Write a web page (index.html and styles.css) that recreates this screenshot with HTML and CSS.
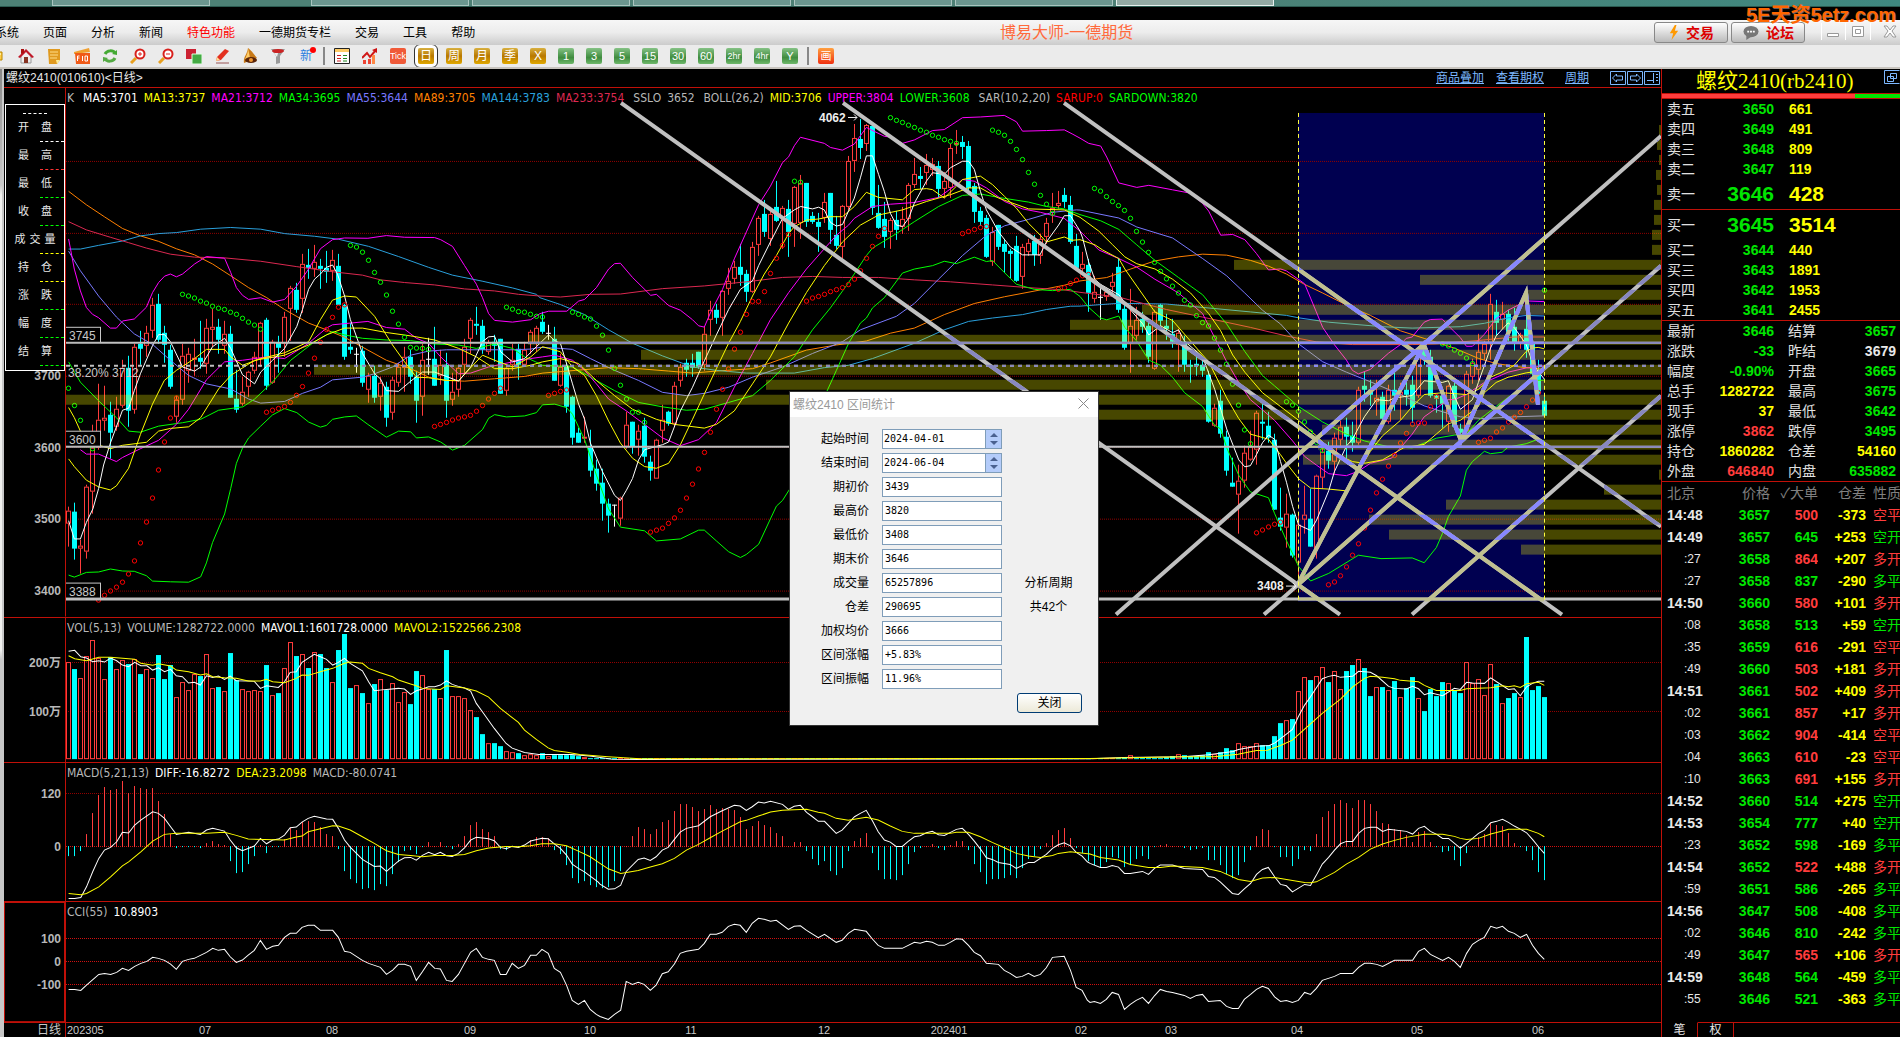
FILE: index.html
```html
<!DOCTYPE html>
<html lang="zh-CN">
<head>
<meta charset="utf-8">
<title>博易大师-一德期货</title>
<link rel="stylesheet" href="styles.css">
</head>
<body>
<div class="taskbar"><i class="task first"></i><i class="task"></i><i class="task"></i><i class="task"></i><i class="task"></i><i class="task"></i><i class="task active"></i></div>
<header class="menubar">
  <nav class="menu">
    <a href="#">系统</a><a href="#">页面</a><a href="#">分析</a><a href="#">新闻</a><a href="#" class="hot">特色功能</a><a href="#">一德期货专栏</a><a href="#">交易</a><a href="#">工具</a><a href="#">帮助</a>
  </nav>
  <h1 class="app-title">博易大师-一德期货</h1>
  <div class="actions">
    <button class="pill"><svg viewBox="0 0 12 18" width="12" height="18"><path d="M7 0 1 10h4L3 18l8-11H7l2-7z" fill="#f90"/></svg>交易</button>
    <button class="pill"><svg viewBox="0 0 18 16" width="18" height="16"><ellipse cx="9" cy="7" rx="8" ry="6" fill="#777"/><path d="M4 11v5l6-4z" fill="#777"/><path d="M5 6h2v2H5zM8 6h2v2H8zM11 6h2v2h-2z" fill="#fff"/></svg>论坛</button>
    <span class="winctl"><svg viewBox="0 0 84 20" width="84" height="20"><g fill="#fff" stroke="#999"><path d="M11.500 10.500h11v3h-11zM36.500 3.500h11v10h-11zM39.500 6.500h5v4h-5z"/><path d="M68 3l3 0 3 4 3-4 3 0-4 5 4 6-3 0-3-4-3 4-3 0 4-6z"/></g><path d="M5.500 0v17M29.500 0v17M54.500 0v17" stroke="#fff"/></svg></span>
  </div>
  <strong class="watermark">5E天资5etz.com</strong>
</header>
<div class="toolbar">
  <button aria-label="打开"><svg viewBox="0 0 16 16"><path d="M0 4h12v8H0z" fill="#fc4" stroke="#b80"/><path d="M1 5h10v2H1z" fill="#fe9"/></svg></button>
  <button aria-label="首页"><svg viewBox="0 0 16 16"><path d="M3 8v7h10V8L8 3z" fill="#eee" stroke="#999"/><path d="M0 9 8 1l8 8-2 1-6-6-6 6z" fill="#c01828"/><path d="M3 1h3v4L3 6z" fill="#a11"/><path d="M6 9h4v6H6z" fill="#832"/></svg></button>
  <button aria-label="公告"><svg viewBox="0 0 16 16"><path d="M2 1h12v11l-3 4H3z" fill="#e09a20"/><path d="M4 4h8M4 7h8M4 10h7" stroke="#fd8"/><path d="m11 16 3-4h-4z" fill="#fe9"/></svg></button>
  <button aria-label="F10"><svg viewBox="0 0 16 16"><path d="m0 4 15-4 1 4-16 2z" fill="#f0a030"/><path d="M1 5h15v11H2z" fill="#f05a18"/><path d="M3.500 13V8h2M3.500 10h2M8.500 13V8M11 8h2.500v5H11z" stroke="#fff" fill="none"/></svg></button>
  <button aria-label="刷新"><svg viewBox="0 0 16 16"><path d="M3 6c2-4 8-4 10-1" stroke="#4a3" stroke-width="3" fill="none"/><path d="m10 6 5 1V2z" fill="#4a3"/><path d="M13 10c-2 4-8 4-10 1" stroke="#5a4" stroke-width="3" fill="none"/><path d="M6 10 1 9v5z" fill="#5a4"/></svg></button>
  <button aria-label="放大"><svg viewBox="0 0 16 16"><path d="m1 15 5-5" stroke="#e8a020" stroke-width="3"/><circle cx="10" cy="6" r="4.500" fill="#fff" stroke="#d8201c" stroke-width="2"/><path d="M8 6h4M10 4v4" stroke="#d22"/></svg></button>
  <button aria-label="缩小"><svg viewBox="0 0 16 16"><path d="m1 15 5-5" stroke="#e8a020" stroke-width="3"/><circle cx="10" cy="6" r="4.500" fill="#fff" stroke="#d8201c" stroke-width="2"/><path d="M8 6h4" stroke="#d22"/></svg></button>
  <button aria-label="叠加"><svg viewBox="0 0 16 16"><path d="M0 1h10v10H0z" fill="#c23"/><path d="M6 6h10v10H6z" fill="#4a4" stroke="#dfd"/></svg></button>
  <button aria-label="画笔"><svg viewBox="0 0 16 16"><path d="m2 13 1-4 8-8 4 2-8 9z" fill="#e33020"/><path d="m2 13 1-4 3 3z" fill="#fd9"/><path d="M2 15h13" stroke="#955"/></svg></button>
  <button aria-label="预警"><svg viewBox="0 0 16 16"><path d="M6 0c4 3 5 5 9 10L2 15C1 9 5 7 6 0z" fill="#c87a18"/><path d="M6 0c0 6-2 8-3 12l5-2z" fill="#fc6"/><ellipse cx="9" cy="12" rx="6" ry="3" fill="#5a2408"/><circle cx="9" cy="12" r="2" fill="#e93"/></svg></button>
  <button aria-label="筛选"><svg viewBox="0 0 16 16"><path d="M1 1h14l-5 7v7l-4 1V8z" fill="#999"/><ellipse cx="8" cy="3" rx="6" ry="2" fill="#c22"/><path d="m4 5 3 4 1-4z" fill="#eee"/></svg></button>
  <button class="new" aria-label="新">新<i></i></button>
  <span class="sep"></span>
  <button aria-label="报价表"><svg viewBox="0 0 16 16"><path d="M.5.5h15v15H.5z" fill="#fff" stroke="#222"/><path d="M1 1h14v3H1z" fill="#fc6"/><path d="M3 7.500h4M3 10.500h4M3 13h4" stroke="#c22"/><path d="M9 7.500h4M9 10.500h4M9 13h4" stroke="#282"/></svg></button>
  <button aria-label="走势"><svg viewBox="0 0 16 16"><path d="M0 10 5 5l3 4 6-7" stroke="#d01818" stroke-width="2" fill="none"/><path d="M1 12h3v4H1zM6 11h3v5H6z" fill="#e43"/><path d="M10 7h3v9h-3z" fill="#f84"/><path d="m10 2 5-2v5z" fill="#c11"/></svg></button>
  <button class="key tick">Tick</button>
  <button class="key gold on">日</button><button class="key gold">周</button><button class="key gold">月</button><button class="key gold">季</button><button class="key gold">X</button>
  <button class="key green">1</button><button class="key green">3</button><button class="key green">5</button><button class="key green">15</button><button class="key green">30</button><button class="key green">60</button><button class="key green small">2hr</button><button class="key green small">4hr</button><button class="key green">Y</button>
  <span class="sep"></span>
  <button class="key draw">画</button>
</div>
<main class="workspace">
  <div class="edge"></div>
  <section class="charts">
    <div class="chart-head"><span>螺纹2410(010610)&lt;日线&gt;</span>
      <nav><a href="#">商品叠加</a><a href="#">查看期权</a><a href="#" class="gap">周期</a>
      <svg viewBox="0 0 51 14" width="51" height="14" fill="none" stroke="#7db8ff"><path d="M.5.5h15v13H.5zM17.500.5h15v13h-15zM34.500.5h15v13h-15z"/><path d="M2.500 7l4-4v2h6v4h-6v2zM30.500 7l-4-4v2h-6v4h6v2zM37 9.500h6M43.500 2v10M46 3.500h2M46 6.500h2M46 9.500h2"/></svg></nav>
    </div>
    <div class="panel price">
      <svg class="plot" id="price" viewBox="4 88 1657 529" preserveAspectRatio="none"></svg>
      <p class="readout"><span class="grey k">K</span><span class="white">MA5:3701</span><span class="yellow">MA13:3737</span><span class="magenta">MA21:3712</span><span class="lime">MA34:3695</span><span class="violet">MA55:3644</span><span class="orange">MA89:3705</span><span class="blue">MA144:3783</span><span class="crimson">MA233:3754</span><span class="grey pre">SSLO</span><span class="grey">3652</span><span class="grey pre">BOLL(26,2)</span><span class="yellow">MID:3706</span><span class="magenta">UPPER:3804</span><span class="lime">LOWER:3608</span><span class="grey pre">SAR(10,2,20)</span><span class="red">SARUP:0</span><span class="lime">SARDOWN:3820</span></p>
      <ul class="infobox">
        <li class="top"></li>
        <li><b>开</b><b>盘</b></li><li class="up"><b>最</b><b>高</b></li><li class="down"><b>最</b><b>低</b></li><li class="down"><b>收</b><b>盘</b></li><li class="qty"><b>成</b><b>交</b><b>量</b></li><li class="qty"><b>持</b><b>仓</b></li><li class="down"><b>涨</b><b>跌</b></li><li class="down"><b>幅</b><b>度</b></li><li class="down"><b>结</b><b>算</b></li>
      </ul>
    </div>
    <div class="panel vol">
      <svg class="plot" id="vol" viewBox="4 618 1657 144" preserveAspectRatio="none"></svg>
      <p class="readout"><span class="grey">VOL(5,13)</span><span class="grey">VOLUME:1282722.0000</span><span class="white">MAVOL1:1601728.0000</span><span class="yellow">MAVOL2:1522566.2308</span></p>
    </div>
    <div class="panel macd">
      <svg class="plot" id="macd" viewBox="4 763 1657 138" preserveAspectRatio="none"></svg>
      <p class="readout"><span class="grey">MACD(5,21,13)</span><span class="white">DIFF:-16.8272</span><span class="yellow">DEA:23.2098</span><span class="grey">MACD:-80.0741</span></p>
    </div>
    <div class="panel cci">
      <svg class="plot" id="cci" viewBox="4 902 1657 120" preserveAspectRatio="none"></svg>
      <p class="readout"><span class="grey">CCI(55)</span><span class="white">10.8903</span></p>
    </div>
    <svg class="plot months" id="months" viewBox="4 1023 1657 14" preserveAspectRatio="none"></svg>
  </section>
  <aside class="quote">
    <h2>螺纹2410(rb2410)<svg viewBox="0 0 16 14" width="16" height="14" fill="none" stroke="#7db8ff"><path d="M15.500.5H.5v13h15M6.500 3.500h6v5h-6zM3.500 6.500h6v5h-6z"/></svg></h2>
    <div class="ratio"><i></i></div>
    <table class="book"><tbody id="asks"></tbody></table>
    <table class="book"><tbody id="bids"></tbody></table>
    <table class="facts"><tbody id="facts"></tbody></table>
    <table class="ticks"><thead><tr><th>北京</th><th>价格</th><th>✓大单</th><th>仓差</th><th>性质</th></tr></thead><tbody id="ticks"></tbody></table>
    <div class="tabs"><button class="on">笔</button><button>权</button></div>
  </aside>
</main>
<section class="dialog" role="dialog" aria-labelledby="dlg">
  <header><h2 id="dlg">螺纹2410 区间统计</h2><button aria-label="关闭窗口"><svg viewBox="0 0 11 11" width="11" height="11"><path d="m.5.5 10 10m0-10-10 10" stroke="#888"/></svg></button></header>
  <form>
    <label for="f1">起始时间</label><span class="spin"><input id="f1" value="2024-04-01"><i></i></span>
    <label for="f2">结束时间</label><span class="spin"><input id="f2" value="2024-06-04"><i></i></span>
    <label for="f3">期初价</label><input id="f3" value="3439">
    <label for="f4">最高价</label><input id="f4" value="3820">
    <label for="f5">最低价</label><input id="f5" value="3408">
    <label for="f6">期末价</label><input id="f6" value="3646">
    <label for="f7">成交量</label><input id="f7" value="65257896"><span class="side">分析周期</span>
    <label for="f8">仓差</label><input id="f8" value="290695"><span class="side">共42个</span>
    <label for="f9">加权均价</label><input id="f9" value="3666">
    <label for="f10">区间涨幅</label><input id="f10" value="+5.83%">
    <label for="f11">区间振幅</label><input id="f11" value="11.96%">
  </form>
  <button class="close">关闭</button>
</section>
<script src="script.js"></script>
</body>
</html>
```
FILE: styles.css
```css
* { box-sizing: border-box; }
html, body { height: 100%; }
body { margin: 0; min-width: 1200px; min-height: 100vh; display: flex; flex-direction: column; overflow: hidden; position: relative; background: #000; color: #e8e8e8; font: 12px/16px "Liberation Sans", "Noto Sans CJK SC", sans-serif; }
button { font: inherit; padding: 0; margin: 0; border: 0; background: none; }
h1, h2, p, ul { margin: 0; padding: 0; font-weight: normal; }
a { color: inherit; text-decoration: none; }

.taskbar { flex: none; height: 7px; display: flex; gap: 3px; padding-left: 52px; background: linear-gradient(90deg, #4d8075 60%, #3f8880); border-bottom: 1px solid #2b5a50; }
.task { width: 158px; background: #6b968f; border: 1px solid #a9c4bf; border-top: 0; }
.task.first { margin-right: 98px; }
.task.active { background: #93aaa4; border-color: #e6efed; }

.menubar { flex: none; position: relative; margin-top: 13px; height: 25px; display: flex; align-items: center; justify-content: space-between; background: linear-gradient(#f6f6f6, #ececec 50%, #cbcbcb); color: #000; }
.menu { display: flex; gap: 24px; margin-left: -5px; white-space: nowrap; flex: 0 0 871px; }
.menu .hot { color: #f00; }
.app-title { font-size: 16px; color: #ff6a3c; flex: 1; text-align: left; padding-left: 134px; white-space: nowrap; }
.actions { display: flex; gap: 3px; align-items: center; }
.pill { width: 74px; height: 21px; display: flex; align-items: center; justify-content: center; gap: 6px; border: 1px solid #888; border-radius: 3px; background: linear-gradient(#fff, #bbb); color: #d00; font-weight: bold; font-size: 14px; }
.pill svg { height: 15px; }
.winctl { width: 92px; padding-left: 8px; height: 20px; }
.watermark { position: absolute; right: 4px; top: -17px; font: bold 20px/24px "Liberation Sans", "Noto Sans CJK SC", sans-serif; color: #ff6600; text-shadow: 1px 1px #fff6; }

.toolbar { flex: none; height: 24px; display: flex; align-items: center; background: #ebebeb; border-bottom: 2px solid #c8c4be; overflow: hidden; }
.toolbar button { width: 28px; flex: none; height: 22px; display: flex; align-items: center; justify-content: center; }
.toolbar button:first-child { margin-left: -16px; }
.toolbar svg { width: 16px; height: 16px; }
.toolbar .sep { width: 2px; height: 18px; margin: 0 3px; flex: none; background: #888; }
.toolbar .new { position: relative; color: #2a7fe0; font-size: 12px; }
.new i { position: absolute; right: 4px; top: 2px; width: 6px; height: 6px; border-radius: 50%; background: #f00; }
.toolbar .key { width: 16px; height: 16px; margin: 0 6px; border-radius: 2px; color: #fff; font-size: 11px; line-height: 16px; }
.key.gold { background: linear-gradient(#d8b040, #b87800 50%, #e0a800); }
.toolbar .key.gold { font-size: 12px; }
.key.gold.on { outline: 1px solid #333; box-shadow: 0 0 0 3px #fff; outline-offset: 3px; }
.key.green { background: linear-gradient(#85c285, #3f8c3f 60%, #6fb86a); }
.toolbar .key.small { font-size: 9px; }
.toolbar .key.tick { background: #f05a38; font-size: 9px; }
.key.draw { background: linear-gradient(#ffa040, #f03010); }

.workspace { flex: 1; min-height: 0; display: flex; }
.edge { width: 4px; background: linear-gradient(#888, #c8c8c8 12%, #f0f0ee 13%, #f0f0ee 60%, #c8c8c8 61%); border-right: 2px solid #c8c8c8; }
.charts { flex: 1; min-width: 0; display: grid; grid-template-rows: 18px 530fr 145fr 139fr 121fr 14px; border-right: 1px solid #c01008; }
.chart-head { display: flex; justify-content: space-between; align-items: center; padding-left: 2px; }
.chart-head nav { display: flex; gap: 12px; color: #7db8ff; align-items: center; }
.chart-head a { text-decoration: underline; }
.chart-head a.gap { margin: 0 9px; }
.panel { position: relative; min-height: 0; border-bottom: 1px solid #c01008; }
.panel.price { border-top: 1px solid #c01008; }
.plot { display: block; width: 100%; height: 100%; overflow: hidden; }
.panel .plot { position: absolute; inset: 0; }
.plot text { font: 12px "Liberation Sans", "Noto Sans CJK SC", sans-serif; fill: #c8c8c8; }
.plot .axis { text-anchor: end; font-size: 12px; font-weight: bold; fill: #b8b8b8; }
.plot .mid { text-anchor: middle; font-size: 11px; }
.plot .start { font-size: 11px; }
.plot .bold { font-weight: bold; fill: #eee; }
.readout { position: absolute; left: 63px; top: 2px; display: flex; gap: 6px; white-space: nowrap; font: 12px/16px "DejaVu Sans Condensed", "Noto Sans", sans-serif; }
.readout .k { margin-right: 3px; }
.readout .pre { margin-left: 3px; }
.grey { color: #b8b8b8; } .white { color: #fff; } .yellow { color: #ff0; } .magenta { color: #f0f; } .lime { color: #0f0; } .violet { color: #7878ff; } .orange { color: #ff8000; } .blue { color: #2aa0dc; } .crimson { color: #dc2850; } .red { color: #f00; }

.infobox { position: absolute; left: 1px; top: 16px; width: 60px; height: 267px; list-style: none; border: 1px solid #fff; background: #000; }
.infobox li { height: 28px; display: flex; justify-content: center; gap: 12px; padding: 5px 0 0; position: relative; line-height: 17px; font-size: 11px; }
.infobox li:nth-child(6) { gap: 4px; }
.infobox b { font-weight: normal; }
.infobox li.top { height: 9px; }
.infobox li::after { content: ""; position: absolute; right: 0; bottom: 0; width: 24px; border-bottom: 1px dashed #fff; }
.infobox li.top::after { right: 17px; }
.infobox .up::after { border-color: #f33; } .infobox .down::after { border-color: #0f0; } .infobox .qty::after { border-color: #ff0; }

.quote { flex: 0 0 238px; overflow: hidden; display: flex; flex-direction: column; }
.quote h2 { height: 24px; flex: none; display: flex; justify-content: space-between; padding-left: 34px; color: #ff0; font: 21px/24px "Liberation Serif", "Noto Sans CJK SC", serif; white-space: nowrap; }
.quote h2 svg { margin-top: 1px; }
.ratio { height: 6px; flex: none; border: solid #c01008; border-width: 1px 0; background: #00e600; }
.ratio i { display: block; height: 4px; width: 81%; background: #ff3c3c; }
.quote table { width: 238px; border-collapse: collapse; table-layout: fixed; border-bottom: 1px solid #c01008; flex: none; }
.quote td, .quote th { padding: 0; height: 20px; font: bold 14px/20px "Liberation Sans", "Noto Sans CJK SC", sans-serif; text-align: right; white-space: nowrap; overflow: hidden; }
.quote .lab { text-align: left; font-weight: normal; padding-left: 5px; color: #e0e0e0; }
.book .lab { width: 40px; } .book .p { width: 72px; }
.book .v { text-align: left; padding-left: 15px; }
.book .big td { height: 30px; line-height: 30px; }
.book .big .p, .book .big .v { font-size: 21px; }
.facts .lab { width: 40px; } .facts .p { width: 72px; }
.facts .lab2 { width: 54px; padding-left: 14px; }
.facts td:last-child { padding-right: 4px; }
.quote .ticks { border-bottom: 0; }
.ticks th, .ticks td { height: 22px; line-height: 22px; }
.ticks th { width: 48px; font-weight: normal; color: #808080; }
.ticks th:first-child { width: 60px; text-align: left; padding-left: 5px; }
.ticks th:last-child { width: auto; text-align: left; padding-left: 7px; text-overflow: clip; }
.ticks td:first-child { text-align: left; padding-left: 5px; }
.ticks td.sec { font-weight: normal; font-size: 12px; padding-left: 22px; }
.ticks td:last-child { text-align: left; padding-left: 7px; font-weight: normal; text-overflow: clip; }
.g { color: #00e600; } .y { color: #ff0; } .r { color: #ff3c3c; } .w { color: #e8e8e8; }
.tabs { margin-top: auto; flex: none; height: 15px; display: flex; overflow: hidden; }
.tabs::after { content: ""; flex: 1; border-top: 1px solid #c01008; }
.tabs button { width: 36px; height: 15px; line-height: 15px; color: #e8e8e8; border-top: 1px solid #c01008; border-right: 1px solid #c01008; }
.tabs .on { border-top-color: #000; }

.dialog { position: absolute; left: 790px; top: 392px; width: 308px; height: 333px; background: #f0f0f0; color: #000; outline: 1px solid #333; }
.dialog header { height: 25px; background: #fff; display: flex; align-items: center; justify-content: space-between; padding: 0 9px 0 3px; }
.dialog h2 { font-size: 12px; color: #999; }
.dialog form { display: grid; grid-template-columns: 79px 120px 80px; grid-auto-rows: 20px; row-gap: 4px; column-gap: 13px; padding-top: 12px; align-items: center; }
.dialog label { text-align: right; grid-column: 1; }
.dialog .side { grid-column: 3; text-align: center; margin-right: 13px; }
.dialog input { width: 100%; min-width: 0; height: 20px; border: 1px solid #7f9db9; background: #fff; padding: 0 2px 1px; font: 10px "DejaVu Sans Mono", monospace; color: #000; }
.spin { display: flex; border: 1px solid #7f9db9; height: 20px; }
.spin input { border: 0; height: 18px; padding: 0 1px 1px; }
.spin i { flex: 0 0 16px; background: #b4ccfa; border-left: 1px solid #7f9db9; display: flex; flex-direction: column; align-items: center; justify-content: center; gap: 4px; }
.spin i::before, .spin i::after { content: ""; border: 4px solid transparent; border-top: 0; border-bottom: 4px solid #4a6190; }
.spin i::after { border-bottom: 0; border-top: 4px solid #4a6190; }
.dialog .close { position: absolute; right: 16px; bottom: 12px; width: 65px; height: 20px; border: 1px solid #003c74; border-radius: 3px; background: linear-gradient(#fff, #ece9d8); }
```
FILE: script.js
```js
// Digitised series are stored per sheet: origin x, origin y, units per pixel x, units per pixel y.
const S = {
  a: [0, 90, 2.8, 2.958], b: [540, 90, 2.8, 2.958], c: [1080, 90, 2.658, 2.904],
  d: [0, 600, 2.45, 3], e: [600, 610, 2.904, 3], f: [1090, 610, 2.703, 3]
};
const X = i => 68 + 6 * i;
const Y = (s, v) => S[s][1] + v / S[s][3];
const RED = '#ff3c3c', CYAN = '#00ffff';
const out = { price: [], vol: [], macd: [], cci: [], months: [] };
const line = (p, x1, y1, x2, y2, c, extra = '') => out[p].push(`<line x1="${x1}" y1="${y1}" x2="${x2}" y2="${y2}" stroke="${c}" ${extra}/>`);
const rect = (p, x, y, w, h, f, extra = '') => out[p].push(`<rect x="${x}" y="${y}" width="${w}" height="${h}" fill="${f}" ${extra}/>`);
const text = (p, x, y, t, cls) => out[p].push(`<text x="${x}" y="${y}" class="${cls || ''}">${t}</text>`);
function curve(p, color, parts) {
  const pts = []; let last = -1;
  for (const [s, str] of parts) for (const q of str.trim().split(/\s+/)) {
    const [a, b] = q.split(',').map(Number), x = S[s][0] + a / S[s][2];
    if (x > last + 1) { pts.push(x.toFixed(1) + ',' + Y(s, b).toFixed(1)); last = x; }
  }
  out[p].push(`<polyline points="${pts.join(' ')}" fill="none" stroke="${color}" stroke-width="1"/>`);
}
const grid = (p, ys, c) => ys.forEach(y => line(p, 66, y + .5, 1661, y + .5, c, 'stroke-dasharray="1 1"'));

// selected range
rect('price', 1298, 113, 246, 489, '#000050');
grid('price', [161, 233, 304, 376, 447, 519, 591], '#900000');

// candles: kind, high, body top, body bottom, low
const candles = [
['a', 0, `r1234,1246,1283,1352 c1222,1248,1357,1390 r1330,1350,1357,1432 r1168,1173,1366,1388 r990,1058,1188,1253 r870,977,1058,1065 r877,970,978,1010 c924,962,1015,1092 r907,945,997,1008 r800,823,934,940 c788,821,950,997 r752,761,948,958 c714,751,766,812 r698,720,757,790 r616,637,712,735 c604,633,740,750 c698,719,755,808 c755,769,879,885 r906,918,968,985 r750,788,918,932 r762,782,830,866 r737,792,800,845 c683,792,805,825 r678,705,810,840 r648,702,709,760 c678,702,740,780 r683,723,758,780 c698,721,910,912 c828,913,948,955 r850,892,930,935 r830,835,880,907 r775,790,830,840 r685,690,795,820 c673,681,876,888 r740,745,867,870 c728,749,762,838 r657,671,750,790 r580,587,649,742 c571,592,651,660 r485,515,619,660 c470,518,526,560 r459,508,530,552 c500,521,530,588 c476,527,537,572 r473,504,535,565 c485,521,635,635 c632,637,790,798 c689,760,770,780 w764,780,780,836 c758,771,866,878 r837,847,886,925 c817,847,910,925 r850,866,908,950 c865,879,971,997 r850,858,955,975 r808,820,866,880 r760,790,822,892 c770,790,848,870 c830,848,919,984 r752,798,909,964 w735,797,797,842 c701,796,876,876 r770,812,847,872 c778,812,920,970 r838,894,918,934 r812,822,887,908 r738,761,814,840 r675,681,737,780 c642,692,699,724 c681,697,768,780 r740,747,774,784 c724,745,758,806 c738,738,898,900 r815,821,890,905 r750,800,812,830 c750,767,812,858 r745,768,812,814 r710,717,748,780 r697,705,748,776 c657,685,716,722 w695,719,719,740 c701,738,861,861`],
['b', 82, `r780,820,875,880 c808,817,937,956 c904,908,1029,1049 c1000,1015,1043,1043 r968,1025,1031,1045 c1005,1058,1126,1145 c1095,1121,1165,1185 c1120,1163,1225,1275 c1210,1225,1259,1310 w1229,1229,1229,1292 r1205,1208,1270,1290 r953,992,1055,1062 c982,982,1055,1076 r990,1010,1035,1083 c970,994,1086,1104 c1082,1101,1126,1156 r1033,1036,1152,1152 r933,975,1008,1045 c950,953,987,995 r865,875,988,998 r810,820,860,880 c797,808,828,850 c782,808,822,848 c775,775,820,826 r700,723,812,830 r625,652,680,728 c632,652,675,692 r592,596,674,728 r527,566,590,605 r506,525,560,575 c457,525,546,580 c533,544,598,626 r450,463,597,600 r374,380,458,490 c326,367,420,434 r345,368,442,460 c270,346,387,390 r344,350,378,470 c325,351,420,493 r284,288,396,465 r252,276,392,440 c275,275,390,404 c360,374,390,396 c365,391,404,480 r306,330,378,392 c306,306,415,457 c372,430,461,470 r340,344,465,500 r196,210,345,355 r102,143,211,243 c85,145,171,205 r100,105,160,180 c100,107,348,370 c282,365,407,412 c330,382,434,466 r378,385,421,471 c358,385,413,445 r345,382,404,425 r276,282,382,418 r200,247,282,290 c228,253,262,293 r188,222,245,280 r200,220,237,255 c210,225,294,320 r243,270,294,318 r160,173,290,318 r118,158,163,188 c137,154,168,203 c150,165,290,310 c275,284,360,392 c345,358,390,402 c370,378,493,497 r405,419,510,520 c400,400,463,473 c440,457,478,540 c470,475,485,558 c432,460,564,568 r457,463,554,590 r440,454,478,490 c428,447,488,520 r425,440,492,515 r380,394,436,455 r305,348,365,392 r298,335,342,352 c290,311,330,350 c314,340,449,455 c425,462,526,530 r478,515,530,540`],
['c', 170, `c490,508,590,645 r540,587,608,618 w568,600,600,668 r585,588,600,612 r530,558,571,590 c488,514,638,648 c625,636,748,754 r578,686,738,822 r630,667,715,725 c645,665,687,705 c675,686,774,792 r640,644,811,812 c622,625,670,684 c650,686,695,725 c665,709,733,748 r695,705,740,818 c715,733,800,818 c785,800,805,851 c765,795,802,830 c775,798,815,832 c815,827,963,967 r912,924,977,980 c870,903,998,1010 c990,1007,1105,1120 c1068,1141,1152,1153 r1090,1136,1175,1288 r1035,1055,1136,1155 r990,1038,1075,1076 r933,937,1046,1090 c912,964,970,1015 c935,976,1012,1025 c1000,1017,1219,1219 c1155,1244,1268,1282 r1172,1230,1273,1330 c1232,1234,1352,1358 r1230,1264,1374,1430 r1150,1235,1250,1288 c1160,1247,1326,1328 r1118,1122,1332,1362 r1040,1050,1128,1160 c1022,1048,1076,1102 r995,1012,1080,1115 r962,980,1016,1040 c952,978,1007,1072 c965,1005,1024,1052 r862,870,1026,1030 c818,860,870,905 c842,870,886,918 r842,893,906,948 c877,892,955,955 r858,872,965,970 c818,872,888,933 r852,878,886,958 c848,871,885,918 c830,857,923,968 r745,760,890,895 c740,752,776,800 c755,775,888,893 c885,890,896,937 c878,890,912,982 r858,860,965,992 c850,860,978,985 c970,984,996,1022 r815,825,990,1000 r780,793,832,853 r710,760,812,844 r728,737,768,785 r592,622,738,785 c610,645,676,715 r615,650,668,695 c640,650,703,730 c632,689,738,757 r705,712,738,752 c578,694,755,778 c725,738,825,830 c785,815,882,915 c883,903,946,950`]];
const kinds = [];
for (const [s, start, str] of candles) str.split(' ').forEach((q, n) => {
  const i = start + n, k = q[0], [h, t, b, l] = q.slice(1).split(',').map(v => Math.round(Y(s, +v))), x = X(i);
  kinds[i] = k;
  if (k === 'c') { rect('price', x, h, 1, Math.max(1, l - h), CYAN); rect('price', x - 2, t, 5, Math.max(1, b - t), CYAN); }
  else if (k === 'w') { rect('price', x, h, 1, l - h, '#fff'); rect('price', x - 2, t, 5, 1, '#fff'); }
  else {
    rect('price', x, h, 1, Math.max(0, t - h), RED); rect('price', x, b, 1, Math.max(0, l - b), RED);
    rect('price', x - 1.5, t + .5, 4, Math.max(1, b - t - 1), 'none', `stroke="${RED}"`);
  }
});

// moving averages and Bollinger bands
curve('price', '#ff8000', [['a', '192,300 242,340 292,375 343,410 393,432 444,448 494,470 545,488 595,515 646,550 696,585 747,615 797,650 864,690 914,710 965,732 1030,770 1082,800 1150,825 1200,850 1250,860 1301,862 1385,855 1468,848 1520,838'], ['b', '0,838 100,830 192,822 276,825 360,832 427,838 494,832 595,825 645,808 746,770 830,755 914,743 981,720 1048,705 1132,665 1216,632 1301,612 1401,592 1468,578'], ['c', '0,555 71,545 135,520 199,497 262,485 326,477 390,480 453,495 501,512 549,535 597,565 645,590 708,625 772,655 852,700 915,722 995,750 1059,780 1106,795 1170,805 1234,812']]);
curve('price', '#2aa0dc', [['a', '192,471 225,471 276,460 343,447 393,432 444,425 494,422 562,412 646,407 730,412 797,425 881,433 948,442 1032,463 1116,493 1200,525 1267,548 1350,566 1435,586 1502,605'], ['b', '0,615 57,635 125,665 192,710 259,750 343,787 427,820 494,830 578,838 712,838 796,822 864,815 931,795 1048,750 1132,710 1200,685 1267,675 1351,665 1418,650 1485,640'], ['c', '0,628 103,620 230,622 326,632 453,645 549,655 581,662 661,675 804,688 883,692 1011,688 1075,678 1138,662 1186,655 1234,657']]);
curve('price', '#dc2850', [['a', '192,390 242,414 309,436 360,452 410,468 477,486 545,495 629,497 730,507 831,523 931,538 1015,548 1065,562 1133,570 1217,577 1301,589 1385,595 1452,605'], ['b', '0,610 57,613 141,605 225,604 343,588 460,580 578,568 679,555 763,552 847,555 948,555 1048,562 1149,568 1267,577 1368,585 1468,592'], ['c', '0,588 103,602 230,638 326,660 453,690 549,715 628,732 724,740 883,740 947,738 1059,728 1154,718 1234,718']]);
curve('price', '#7878ff', [['a', '192,477 225,535 276,610 326,672 376,722 427,753 477,800 528,845 578,870 646,885 696,915 730,927 797,922 847,898 897,880 931,858 1015,850 1049,840 1099,820 1150,785 1200,773 1250,769 1435,769 1486,767'], ['b', '0,762 57,765 91,768 141,795 209,830 276,860 343,895 410,905 460,898 528,880 595,850 679,820 763,780 847,745 897,710 998,670 1048,632 1116,560 1183,490 1250,430 1301,402 1368,383 1435,362 1502,355'], ['c', '0,349 103,372 151,398 246,430 326,490 390,540 438,590 485,640 533,680 581,738 645,790 708,820 772,848 852,885 915,918 963,935 1011,950 1075,955 1154,950 1234,947']]);
curve('price', '#00ff00', [['a', '192,805 225,865 276,920 326,970 360,1010 393,1013 444,995 511,985 562,975 612,948 680,938 713,915 763,865 814,800 881,745 931,715 965,725 1015,735 1082,740 1150,742 1217,752 1284,755 1334,765 1385,752 1435,765 1469,790 1500,805'], ['b', '7,815 91,820 141,850 209,890 276,925 343,938 410,948 460,945 528,925 595,905 645,860 712,790 763,710 813,645 864,570 914,490 931,468 998,425 1048,390 1116,345 1183,312 1233,308 1284,318 1368,332 1418,345 1468,352'], ['c', '0,362 55,380 103,405 151,450 199,495 262,545 326,595 390,680 438,760 485,830 517,860 581,920 645,965 708,1000 756,1020 820,1037 883,1040 947,1012 995,1003 1027,1000 1059,960 1106,920 1154,880 1202,845 1234,843']]);
curve('price', '#ff00ff', [['a', '225,1065 242,1078 276,1078 326,1100 343,1088 393,1062 444,1037 494,990 528,945 578,858 629,805 679,800 747,790 797,795 864,750 914,705 931,695 1030,685 1082,703 1133,708 1166,735 1200,750 1234,790 1284,840 1318,838 1368,820 1435,805 1486,795'], ['b', '7,790 41,785 91,800 125,830 158,870 192,915 242,950 293,990 343,1030 393,1053 444,1035 494,985 544,880 595,780 645,680 696,600 746,530 796,470 830,430 864,400 880,380 931,345 981,338 1048,333 1116,318 1166,280 1183,265 1216,270 1250,290 1301,330 1351,352 1401,362 1468,380'], ['c', '0,410 50,465 103,490 151,515 199,550 262,590 326,650 358,720 390,790 422,850 453,900 485,930 517,960 565,1020 597,1065 628,1090 661,1115 708,1121 740,1108 772,1085 828,1070 852,1040 883,1000 915,950 947,925 979,900 995,900 1027,885 1075,850 1138,820 1186,808 1234,802']]);
curve('price', '#ffff00', [['a', '192,940 208,970 225,1010 242,1040 309,1062 343,1052 410,1043 444,1010 477,1002 528,997 562,970 612,885 646,845 713,800 797,785 864,755 914,725 965,705 1015,705 1082,718 1150,728 1217,740 1284,765 1334,790 1385,825 1435,825 1486,815'], ['b', '7,805 57,795 108,810 158,860 209,905 259,945 326,975 377,990 460,1001 494,990 544,950 595,870 645,790 696,690 746,600 796,520 847,450 897,400 948,370 1015,355 1082,330 1149,310 1200,290 1233,290 1284,320 1368,352 1468,355'], ['c', '0,370 50,410 87,450 119,485 151,505 199,520 246,550 294,590 342,650 374,700 406,770 438,820 485,880 533,920 581,960 628,1005 676,1055 724,1080 756,1085 804,1075 860,1040 915,1030 947,1000 979,970 1011,960 1059,920 1075,880 1106,850 1138,835 1186,822 1234,815']]);
curve('price', '#ffff00', [['a', '192,1092 208,1115 242,1155 276,1175 309,1184 326,1172 360,1120 393,1020 427,930 460,860 494,830 545,795 578,768 629,768 646,790 679,815 730,795 797,778 864,745 897,680 931,622 965,610 998,613 1049,670 1099,755 1133,805 1166,850 1200,852 1250,860 1284,860 1318,822 1351,785 1385,800 1435,820 1486,790'], ['b', '7,760 24,765 57,775 91,820 125,845 158,905 192,980 225,1045 259,1090 293,1115 326,1120 360,1105 393,1050 427,975 460,900 494,825 528,750 561,685 595,610 628,545 662,490 696,425 712,405 746,385 780,382 813,375 847,375 880,345 914,303 948,318 1015,325 1048,295 1082,292 1099,295 1132,320 1166,285 1183,265 1233,255 1267,280 1301,315 1334,350 1368,395 1401,430 1418,450 1468,435 1490,445'], ['c', '0,435 40,450 60,465 103,490 119,520 151,570 199,645 246,670 294,730 326,770 342,790 374,860 390,895 422,955 453,1000 485,1010 501,1015 533,1060 549,1085 581,1130 613,1157 661,1160 708,1165 724,1140 740,1110 772,1050 804,1005 852,960 883,920 915,885 963,880 1027,885 1059,870 1091,835 1122,820 1154,800 1170,780 1186,760 1202,750 1218,748 1234,752']]);
curve('price', '#ff00ff', [['a', '192,441 208,530 225,595 242,644 259,664 276,674 309,705 326,705 343,684 376,678 410,643 427,600 444,570 461,551 477,545 494,553 511,545 545,515 578,493 629,498 646,540 662,585 679,608 696,620 730,615 763,628 797,620 831,580 864,530 897,470 931,443 965,438 1030,439 1082,431 1133,436 1217,437 1234,443 1267,463 1301,520 1334,575 1351,615 1368,662 1385,682 1435,687 1486,680'], ['b', '0,662 24,655 75,655 108,625 125,620 158,585 192,530 209,514 225,513 259,555 310,608 326,605 360,638 393,652 427,680 444,698 460,702 477,660 511,590 544,500 578,420 612,340 645,285 679,215 696,198 712,165 729,140 796,158 813,170 847,178 880,160 914,111 964,137 985,140 1015,158 1048,148 1099,120 1132,117 1183,82 1233,80 1300,75 1334,94 1351,122 1418,120 1468,118 1490,130'], ['c', '0,140 23,155 55,163 71,195 103,270 151,283 183,277 246,290 294,300 326,330 342,352 374,422 406,420 438,435 469,475 501,523 533,520 549,526 597,563 613,605 628,645 645,690 676,740 708,785 724,815 740,825 772,812 820,765 852,740 867,722 883,718 915,675 931,667 963,666 979,685 1011,720 1027,745 1043,745 1075,710 1106,665 1138,640 1170,622 1186,613 1234,615']]);
curve('price', '#00ff00', [['a', '192,1436 208,1442 242,1428 276,1427 309,1418 343,1424 376,1425 410,1438 427,1454 477,1456 528,1457 562,1441 578,1400 595,1340 629,1255 646,1180 662,1105 679,1060 696,1030 730,995 763,962 797,943 831,955 864,983 897,998 914,993 931,975 965,968 998,965 1030,990 1082,1028 1116,1010 1150,1012 1166,1030 1200,1027 1234,1042 1267,1066 1301,1052 1351,1005 1368,972 1385,961 1418,968 1469,965 1502,955'], ['b', '7,932 41,930 74,940 91,960 125,1035 158,1140 192,1240 225,1294 293,1305 326,1335 393,1329 444,1303 460,1303 494,1335 528,1367 561,1384 578,1375 612,1345 645,1270 662,1232 679,1215 700,1180 800,900 830,830 864,750 897,690 914,675 931,645 964,615 1015,542 1048,530 1099,520 1132,507 1166,514 1216,495 1250,508 1267,505 1300,540 1334,575 1384,590 1435,594 1485,590'], ['c', '0,600 23,632 55,663 71,668 103,657 119,690 151,730 183,785 214,800 246,835 278,880 326,920 358,975 374,985 390,1040 422,1120 438,1145 453,1168 501,1185 517,1230 549,1310 581,1385 613,1427 661,1405 740,1352 800,1362 883,1360 915,1374 947,1330 963,1290 979,1240 1011,1180 1027,1105 1043,1080 1075,1050 1091,1057 1122,1053 1138,1038 1186,1028 1218,1015 1234,1020']]);
curve('price', '#ffffff', [['a', '192,1275 208,1329 225,1329 242,1280 260,1240 276,1180 290,1110 309,1045 343,948 360,942 376,890 393,840 427,757 444,724 461,724 477,745 511,820 545,832 562,820 595,760 629,735 646,765 679,843 713,870 730,835 763,800 797,765 831,700 847,650 864,590 881,560 897,545 914,525 931,518 945,545 965,610 981,680 1015,780 1049,840 1065,855 1082,890 1116,892 1150,862 1183,835 1217,835 1250,848 1284,862 1318,820 1351,745 1368,731 1385,729 1402,775 1435,805 1469,795 1502,760'], ['b', '24,725 41,742 57,750 74,808 91,870 108,930 125,975 141,1045 175,1130 209,1200 225,1215 242,1185 259,1150 276,1095 293,1065 343,1050 360,1042 393,950 427,880 461,800 494,725 528,650 561,590 595,565 612,520 645,450 679,380 712,355 730,345 763,352 780,347 796,355 813,392 830,403 847,398 880,320 897,260 914,195 931,195 948,250 964,300 981,365 998,400 1015,404 1032,380 1048,335 1082,270 1099,245 1132,250 1149,230 1183,211 1200,211 1216,235 1233,300 1250,355 1284,420 1317,465 1351,488 1400,488 1418,450 1452,400 1468,372 1485,372'], ['c', '0,410 7,430 23,500 39,550 55,565 103,595 135,640 167,680 183,712 214,685 246,705 262,697 278,730 326,775 358,870 390,985 422,1075 438,1095 453,1092 469,1060 485,1025 501,1003 517,1015 533,1080 549,1140 565,1210 581,1264 613,1280 629,1250 661,1165 676,1110 708,1035 724,1015 756,950 788,900 820,903 836,895 883,888 915,845 963,850 979,845 995,890 1011,928 1043,900 1059,850 1091,750 1106,715 1138,677 1154,690 1186,740 1202,790 1218,818 1234,840']]);

// parabolic SAR
const sar = [
['a', 0, 'g', '883 934 978'], ['a', 4, 'g', '1062'], ['a', 5, 'r', '1510 1496 1483 1472 1457 1433 1394 1341 1279 1208 1125 1042 971 912'],
['a', 19, 'g', '605 610 616 625 631 640 646 650 658 664 676 687 696 708'], ['a', 33, 'r', '954 948 943 937 925 904 878 838 794 747 709 673 643 636'],
['a', 47, 'g', '460 465 480 504 540 569 607 655 693 732 762 764 765 768'], ['a', 61, 'r', '996 990 984 977 971 968 963 951 934 915 898 883'],
['a', 73, 'g', '643 649 656 658 664 670 672'], ['b', 80, 'r', '904 898 892 888'], ['b', 84, 'g', '658 664 672 678 699 726 770 824 874 915 954 954 984'],
['b', 97, 'r', '1309 1303 1297 1283 1267 1244 1208 1167 1122 1073 1013 945 886 826 767 717 664 626 626 597 543 498 460 428'], ['b', 121, 'g', '270 273'],
['b', 123, 'r', '625 616 611 605 597 591 585 576 560 535 498 463 433 410'], ['b', 137, 'g', '82 90 96 104 111 119 125 134 140 147 152 158'],
['b', 149, 'r', '425 419 413 407 404'], ['b', 154, 'g', '119 125 134 152 176 206 244 279 312 338 365'], ['b', 165, 'r', '590 585 573 563 550 546'],
['c', 171, 'g', '286 294 310 324 336 350 373 411 442 472 501 527 549 570 590 611 625 656 676 686 721 756 797 855 916 988 1028'],
['c', 198, 'r', '1287 1279 1270 1262 1256'], ['c', 203, 'g', '906 916 934 965 994 1024 1048'],
['c', 210, 'r', '1438 1430 1412 1386 1352 1319 1273 1221 1171 1131 1093 1062 1026 998 971 968 968 921 891'], ['c', 229, 'g', '738 744 756 765 779 795'],
['c', 235, 'r', '1024 1018 1012 994 982 965 951 937 921 901 880'], ['c', 246, 'g', '582']];
for (const [s, start, c, str] of sar) str.split(' ').forEach((v, n) =>
  out.price.push(`<circle cx="${X(start + n) + .5}" cy="${Y(s, +v).toFixed(1)}" r="2.2" fill="none" stroke="${c === 'g' ? '#00ff00' : '#ff0000'}"/>`));

// volume profile, top row first
const profile = [[125, 1659], [140, 1657], [155, 1659], [170, 1656], [185, 1657], [200, 1654], [215, 1654], [230, 1652], [245, 1652], [260, 1234], [275, 1420], [290, 1528], [305, 1142], [320, 1070], [335, 528], [350, 641], [365, 314], [380, 766], [395, 66], [410, 900], [425, 1322], [440, 1318], [455, 1303], [470, 1659], [485, 1604], [500, 1446], [515, 1369], [530, 1389], [545, 1521]];
profile.forEach(([y, x]) => rect('price', x, y, 1661 - x, 10, '#ffff00', 'fill-opacity=".28"'));

// drawn lines change colour over the selected range and over the profile bars
const clip = (id, boxes) => `<clipPath id="${id}">${boxes.map(([x, y, w, h]) => `<rect x="${x}" y="${y}" width="${w}" height="${h}"/>`).join('')}</clipPath>`;
out.price.push('<defs>',
  clip('inRange', [[1298, 113, 246, 489]]),
  clip('inBars', profile.map(([y, x]) => [x, y, 1661 - x, 10])),
  clip('inBoth', profile.filter(([, x]) => x < 1544).map(([y, x]) => [Math.max(x, 1298), y, 1544 - Math.max(x, 1298), 10])),
  '<g id="drawn" fill="none"><path d="M66 343H1661M66 447H1661" stroke-width="2"/><path d="M66 599.500H1661" stroke-width="3"/><path d="M66 366H1661" stroke-width="2" stroke-dasharray="4 4"/>',
  '<path stroke-width="4" d="M621 103 1340 615M843 103 1562 615M1064 103 1661 527M1116 615 1661 136M1264 615 1661 266M1412 615 1661 396M1298 584 1424 345 1461 441 1526 293 1538 405"/></g></defs>',
  '<use href="#drawn" stroke="#c0c0c0"/>',
  '<g clip-path="url(#inRange)"><use href="#drawn" stroke="#c0c090"/></g>',
  '<g clip-path="url(#inBars)"><use href="#drawn" stroke="#8888c0"/></g>',
  '<g clip-path="url(#inBoth)"><use href="#drawn" stroke="#8888ff"/></g>');
[1298.5, 1544.5].forEach(x => line('price', x, 113, x, 602, '#ffff40', 'stroke-dasharray="4 3"'));
[[327, 3745], [431, 3600], [583, 3388]].forEach(([y, t]) => { rect('price', 65.5, y + .5, 35, 15, '#000', 'stroke="#c8c8c8"'); text('price', 69, y + 13, t); });
text('price', 68, 377, '38.20% 3712');
text('price', 819, 122, '4062', 'bold'); text('price', 1257, 590, '3408', 'bold');
out.price.push('<path d="M848 117.500h9m-3-3 3 3-3 3M1286 586.500h10m-3-3 3 3-3 3" stroke="#eee" fill="none"/>');
[[3700, 380], [3600, 452], [3500, 523], [3400, 595]].forEach(([t, y]) => text('price', 61, y, t, 'axis'));

// volume
grid('vol', [662, 711], '#900000');
const v1 = '187 207 235 169 121 174 238 171 208 181 192 178 222 208 235 165 237 195 292 247 271 223 228 163 265 261 274 159 240 268 274 271 274 195 286 279 205 127 168 163 204 157 162 204 247 150 102 264 256 279 310 252 238 271 250 307 276 312 213 226 268 267 295 150 289 289 295 331 351 402 430 429 438 454 457 459 466 463 464 459 469 464 465 464 466 467 470 473'.split(' ').map(v => 477 - v);
const v2 = '441 436 443 443 443 443 443 442 438 433 435 438 437 436 426 431 426 414 421 400 409 408 400 405 405 378 339 331 327 244 202 210 199 172 216 184 238 183 165 148 174 258 232 231 241 213 262 235 201 265 303 237 257 216 220 239 249 157 220 208 256 163 222 280 264 249 262 81 240 228 262'.split(' ').map(v => 447 - v);
const redVol1 = [0,2,3,4,5,6,8,9,11,13,14,18,19,20,21,23,24,26,29,30,31,32,34,36,37,39,41,44,48,50,52,54,55,56,59,60,62,64,65,66,67,70,73,74,76,77,78,80,86];
const redVol2 = [177,185,191,195,196,197,198,203,205,206,208,209,211,212,215,218,220,222,225,230,233,234,235,236,237,239,242];
for (let i = 0; i < 247; i++) {
  const h = i < v1.length ? v1[i] / 3 : i >= 176 ? v2[i - 176] / 3 : 1;
  const isRed = i < 88 ? redVol1.includes(i) : i >= 176 ? redVol2.includes(i) : kinds[i] === 'r';
  const y = Math.round(759 - h), hh = 759 - y;
  if (!isRed || hh < 2) rect('vol', X(i) - 2, y, 5, hh, isRed ? RED : CYAN);
  else rect('vol', X(i) - 1.5, y + .5, 4, hh - 1, 'none', `stroke="${RED}"`);
}
curve('vol', '#ffffff', [['d', '168,154 183,151 198,170 212,174 227,185 242,182 256,186 271,174 286,182 300,195 315,200 330,187 345,197 360,197 374,210 388,203 403,215 418,208 432,227 447,230 462,249 476,247 491,255 506,227 521,232 535,228 550,238 564,228 579,242 608,243 623,244 638,265 653,257 682,262 697,245 711,217 726,215 740,187 770,163 785,170 800,178 815,195 829,187 844,175 858,190 888,212 903,245 917,272 947,268 976,265 991,267 1006,283 1020,272 1035,267 1050,260 1065,260 1079,255 1094,242 1108,253 1123,259 1138,264 1153,273 1167,310 1182,335 1211,385 1240,430 1255,444 1285,457 1320,463 1400,463 1450,468 1500,477 1568,478'], ['f', '0,446 90,442 250,440 320,434 387,424 401,418 450,408 485,406 500,398 531,372 547,358 563,320 580,285 596,260 612,233 628,206 645,199 661,196 677,202 710,199 726,184 758,187 775,197 807,229 823,235 855,237 872,229 888,236 904,254 920,248 953,257 985,235 1001,238 1018,217 1034,219 1066,220 1083,203 1099,215 1131,238 1147,236 1163,257 1180,230 1196,220 1212,214 1228,214']]);
curve('vol', '#ffff00', [['d', '168,167 183,176 212,182 242,172 271,172 330,178 345,190 374,196 388,191 418,198 432,210 462,215 491,225 506,221 521,230 550,233 579,235 608,243 638,243 653,238 668,245 697,248 726,235 740,225 755,226 785,215 815,205 844,190 858,186 888,190 903,205 932,218 962,230 976,240 1006,252 1020,257 1035,265 1079,268 1094,257 1138,264 1167,273 1197,291 1226,325 1270,367 1285,390 1314,418 1343,443 1358,451 1390,456 1420,463 1490,470 1568,476'], ['f', '0,445 250,440 335,440 400,432 450,421 480,420 515,406 547,390 580,357 628,310 677,267 710,230 742,205 758,199 791,202 823,206 839,211 888,215 904,226 936,241 1001,241 1018,236 1083,233 1115,227 1131,230 1147,227 1163,232 1180,221 1212,217 1228,226']]);
text('vol', 61, 667, '200万', 'axis'); text('vol', 61, 716, '100万', 'axis');

// MACD
grid('macd', [793], '#900000'); grid('macd', [846], '#d01010');
const m1 = '768 768 755 699 636 582 558 567 564 540 576 555 561 564 561 600 640 700 744 741 740 740 744 726 720 729 733 783 819 816 792 768 732 759 741 741 715 683 687 665 661 663 680 700 705 747 813 837 849 867 864 870 852 858 822 787 753 750 762 741 723 736 723 741 747 729 705 672 663 684 693 705 747 750 741 742 735 718 708 708 711 750 762 795 834 849 843 855 861'.split(' ').map(v => v - 739);
const m2 = '836 833 813 783 706 675 648 654 669 654 633 627 600 579 579 588 600 594 582 594 591 594 597 618 654 645 630 642 648 666 675 705 693 693 725 747 765 755 783 797 774 725 690 681 666 729 780 809 809 812 797 762 728 716 706 699 716 722 702 690 690 722 762 786 822 809 809 804 795 804 774 747 738 719 696 672 657 652 682 716 729 753 765 771 758 741 746 773 765 749 738 749 713 702 699 706 706 716 722 719 716 752 752 765 794 806 797 758 722 675 654 657 709 743 743 770 749 722 725 669 618 600 579 567 576 591 567 567 579 600 636 639 654 657 672 693 663 660 693 711 728 725 752 770 731 705 680 670 636 642 645 666 696 709 725 752 788 812'.split(' ').map(v => v - 709);
m1.concat(m2).forEach((v, i) => { const h = Math.max(1, Math.round(Math.abs(v) / 3)); rect('macd', X(i), v < 0 ? 847 - h : 846, 1, h, v < 0 ? RED : CYAN); });
curve('macd', '#ffffff', [['d', '168,895 183,895 198,892 212,860 227,815 242,775 256,750 271,742 286,725 300,697 315,699 330,675 345,660 374,635 388,640 403,655 418,680 432,703 462,697 491,703 506,690 521,685 550,693 564,720 579,743 594,752 623,738 638,715 653,731 668,720 682,717 697,705 711,683 726,681 740,666 755,655 770,649 800,657 815,658 829,685 844,720 858,741 888,778 917,799 932,798 947,814 976,783 991,773 1006,772 1020,780 1035,766 1050,757 1065,764 1079,757 1094,767 1108,769 1123,760 1138,743 1153,720 1167,712 1197,716 1211,722 1226,742 1240,746 1255,739 1270,742 1285,735 1300,723 1328,715 1343,716 1358,731 1373,745 1388,765 1402,792 1417,805 1432,815 1446,828 1465,845'], ['e', '0,822 24,837 42,836 60,825 76,784 111,748 128,744 146,751 163,740 181,720 198,712 216,688 233,666 251,655 286,647 320,620 355,602 390,586 407,588 425,601 442,590 460,576 477,579 495,574 530,583 547,598 564,589 582,586 600,607 617,620 634,634 652,634 686,670 703,660 721,640 739,620 756,610 773,601 791,632 808,665 826,690 843,696 860,709 878,709 895,694 913,680 930,677 948,668 965,664 983,674 1000,676 1035,658 1052,655 1070,673 1087,693 1105,717 1122,743 1139,748 1157,757 1191,763 1209,775 1244,757 1261,757 1296,733 1314,715 1331,704 1348,698 1366,707 1383,727 1400,738 1415,755'], ['f', '0,760 28,772 44,772 60,766 77,771 93,790 109,790 142,784 158,793 174,775 190,765 223,765 255,775 304,778 320,799 336,802 352,815 385,850 401,853 417,836 434,820 450,793 466,778 482,772 499,800 515,823 531,827 547,845 580,823 596,826 612,795 628,762 645,742 661,720 677,701 693,694 710,694 726,670 742,655 758,652 775,652 791,664 807,658 855,664 872,672 888,655 904,649 920,664 936,672 953,685 969,685 1001,714 1018,700 1050,670 1066,660 1083,638 1099,634 1115,628 1131,637 1147,648 1163,657 1180,668 1196,688 1212,710 1228,730']]);
curve('macd', '#ffff00', [['d', '168,880 198,884 212,880 242,860 271,830 300,797 315,785 345,755 374,723 403,703 432,700 506,700 550,697 579,706 608,717 697,720 726,711 740,708 755,695 785,686 815,677 829,678 858,690 888,710 917,730 947,752 976,763 1006,766 1035,770 1065,766 1108,766 1138,763 1167,752 1197,744 1240,739 1270,740 1300,737 1328,731 1358,731 1388,737 1417,753 1446,770'], ['e', '0,760 24,776 60,790 111,781 146,771 181,761 216,745 251,720 286,703 320,683 355,663 407,635 425,631 460,618 495,606 530,601 600,598 634,607 652,610 686,625 721,631 773,622 808,630 843,648 878,664 913,670 1017,670 1035,667 1070,667 1105,680 1139,697 1174,713 1209,730 1244,738 1279,742 1314,736 1331,730 1366,725 1410,730'], ['f', '0,732 28,742 77,750 109,763 158,772 190,772 223,768 304,772 352,784 401,808 434,814 466,804 499,802 580,817 596,818 612,815 661,787 693,762 726,742 758,717 791,702 823,691 855,682 904,673 953,673 985,679 1001,685 1018,688 1050,685 1083,672 1115,663 1131,658 1180,658 1212,670 1228,680']]);
text('macd', 61, 798, '120', 'axis'); text('macd', 61, 851, '0', 'axis');

// CCI
grid('cci', [938, 961, 984], '#d01010');
curve('cci', '#ffffff', [['d', '168,1168 183,1168 198,1171 212,1155 242,1123 256,1120 271,1123 286,1117 300,1105 315,1111 330,1099 345,1090 360,1084 374,1072 388,1075 403,1081 418,1092 432,1108 447,1084 462,1078 476,1075 506,1057 521,1045 535,1051 550,1048 564,1070 579,1087 594,1080 608,1065 623,1051 638,1021 653,1048 668,1039 682,1036 697,1012 711,1000 726,1000 740,982 755,976 770,976 785,991 815,991 829,1012 844,1054 858,1057 888,1081 903,1090 932,1102 947,1123 962,1110 976,1093 991,1093 1006,1099 1020,1141 1035,1115 1050,1087 1065,1105 1079,1107 1094,1141 1108,1144 1123,1123 1138,1090 1153,1057 1167,1045 1182,1072 1197,1078 1211,1081 1226,1123 1240,1123 1255,1090 1270,1105 1285,1096 1300,1066 1314,1066 1328,1048 1343,1060 1358,1105 1373,1117 1388,1155 1402,1201 1417,1213 1432,1201 1446,1228 1461,1243'], ['e', '0,1219 24,1228 42,1213 60,1200 76,1114 94,1123 111,1117 128,1123 146,1141 163,1125 181,1091 198,1085 216,1062 233,1030 251,1024 286,1018 303,1000 320,973 338,973 355,967 373,949 390,943 407,946 425,967 442,940 460,925 477,928 495,934 512,931 547,958 564,949 582,947 600,961 634,983 652,973 686,997 703,991 721,970 739,958 773,964 791,987 808,1006 826,1015 878,1015 913,997 930,1000 948,994 965,997 983,1006 1000,1006 1017,997 1035,986 1052,988 1070,1006 1087,1027 1105,1037 1122,1060 1157,1063 1174,1081 1191,1090 1209,1102 1226,1099 1244,1090 1261,1099 1279,1093 1296,1073 1314,1042 1348,1039 1366,1080 1383,1132 1400,1141 1415,1170'], ['f', '0,1177 12,1174 28,1180 44,1168 60,1147 77,1153 93,1198 109,1183 125,1171 142,1162 158,1180 174,1157 190,1138 207,1144 223,1147 255,1156 271,1165 288,1156 304,1153 320,1174 352,1171 369,1189 385,1195 401,1195 417,1168 434,1153 450,1138 466,1129 482,1135 499,1160 515,1174 531,1171 547,1177 563,1171 580,1147 596,1153 612,1135 628,1111 661,1099 677,1090 710,1090 726,1072 742,1060 758,1060 775,1063 791,1069 823,1051 872,1051 888,1024 904,1015 920,1033 953,1051 969,1042 985,1054 1001,1072 1018,1030 1034,1003 1050,991 1066,982 1083,949 1099,955 1115,949 1131,964 1147,970 1163,982 1180,973 1196,1006 1212,1030 1228,1048']]);
text('cci', 61, 943, '100', 'axis'); text('cci', 61, 966, '0', 'axis'); text('cci', 61, 989, '-100', 'axis');
rect('cci', 4.5, 902.5, 60, 119, 'none', 'stroke="#c01008"');

text('months', 37, 1034, '日线'); text('months', 67, 1034, '202305', 'start');
[[205, '07'], [332, '08'], [470, '09'], [590, '10'], [691, '11'], [824, '12'], [949, '202401'], [1081, '02'], [1171, '03'], [1297, '04'], [1417, '05'], [1538, '06']].forEach(([x, t]) => text('months', x, 1034, t, 'mid'));
[['price', 88, 617], ['vol', 618, 762], ['macd', 763, 901], ['cci', 902, 1022], ['months', 1023, 1037]].forEach(([p, a, b]) => line(p, 65.5, a, 65.5, b, '#c01008'));
for (const id in out) document.getElementById(id).innerHTML = out[id].join('');

// quote tables
const fill = (id, rows) => { document.getElementById(id).innerHTML = rows.join(''); };
const book = ([n, p, v], big) => `<tr${big ? ' class="big"' : ''}><td class="lab">${n}</td><td class="p g">${p}</td><td class="v y">${v}</td></tr>`;
fill('asks', [['卖五', 3650, 661], ['卖四', 3649, 491], ['卖三', 3648, 809], ['卖二', 3647, 119], ['卖一', 3646, 428]].map((r, i) => book(r, i === 4)));
fill('bids', [['买一', 3645, 3514], ['买二', 3644, 440], ['买三', 3643, 1891], ['买四', 3642, 1953], ['买五', 3641, 2455]].map((r, i) => book(r, i === 0)));
fill('facts', ['最新 g 3646 结算 g 3657', '涨跌 g -33 昨结 w 3679', '幅度 g -0.90% 开盘 g 3665', '总手 y 1282722 最高 g 3675', '现手 y 37 最低 g 3642', '涨停 r 3862 跌停 g 3495', '持仓 y 1860282 仓差 y 54160', '外盘 r 646840 内盘 g 635882'].map(s => {
  const [a, b, c, d, e, f] = s.split(' ');
  return `<tr><td class="lab">${a}</td><td class="p ${b}">${c}</td><td class="lab lab2">${d}</td><td class="${e}">${f}</td></tr>`;
}));
fill('ticks', ['14:48 3657 500 -373 空平 r r', '14:49 3657 645 +253 空开 g g', ':27 3658 864 +207 多开 r r', ':27 3658 837 -290 多平 g g', '14:50 3660 580 +101 多开 r r', ':08 3658 513 +59 空开 g g', ':35 3659 616 -291 空平 r r', ':49 3660 503 +181 多开 r r', '14:51 3661 502 +409 多开 r r', ':02 3661 857 +17 多开 r r', ':03 3662 904 -414 空平 r r', ':04 3663 610 -23 空平 r r', ':10 3663 691 +155 多开 r r', '14:52 3660 514 +275 空开 g g', '14:53 3654 777 +40 空开 g g', ':23 3652 598 -169 多平 g g', '14:54 3652 522 +488 多开 r r', ':59 3651 586 -265 多平 g g', '14:56 3647 508 -408 多平 g g', ':02 3646 810 -242 多平 g g', ':49 3647 565 +106 多开 r r', '14:59 3648 564 -459 多平 g g', ':55 3646 521 -363 多平 g g'].map(s => {
  const [t, p, v, d, n, c1, c2] = s.split(' ');
  return `<tr><td class="w${t[0] === ':' ? ' sec' : ''}">${t}</td><td class="g">${p}</td><td class="${c1}">${v}</td><td class="y">${d}</td><td class="${c2}">${n}</td></tr>`;
}));
```
